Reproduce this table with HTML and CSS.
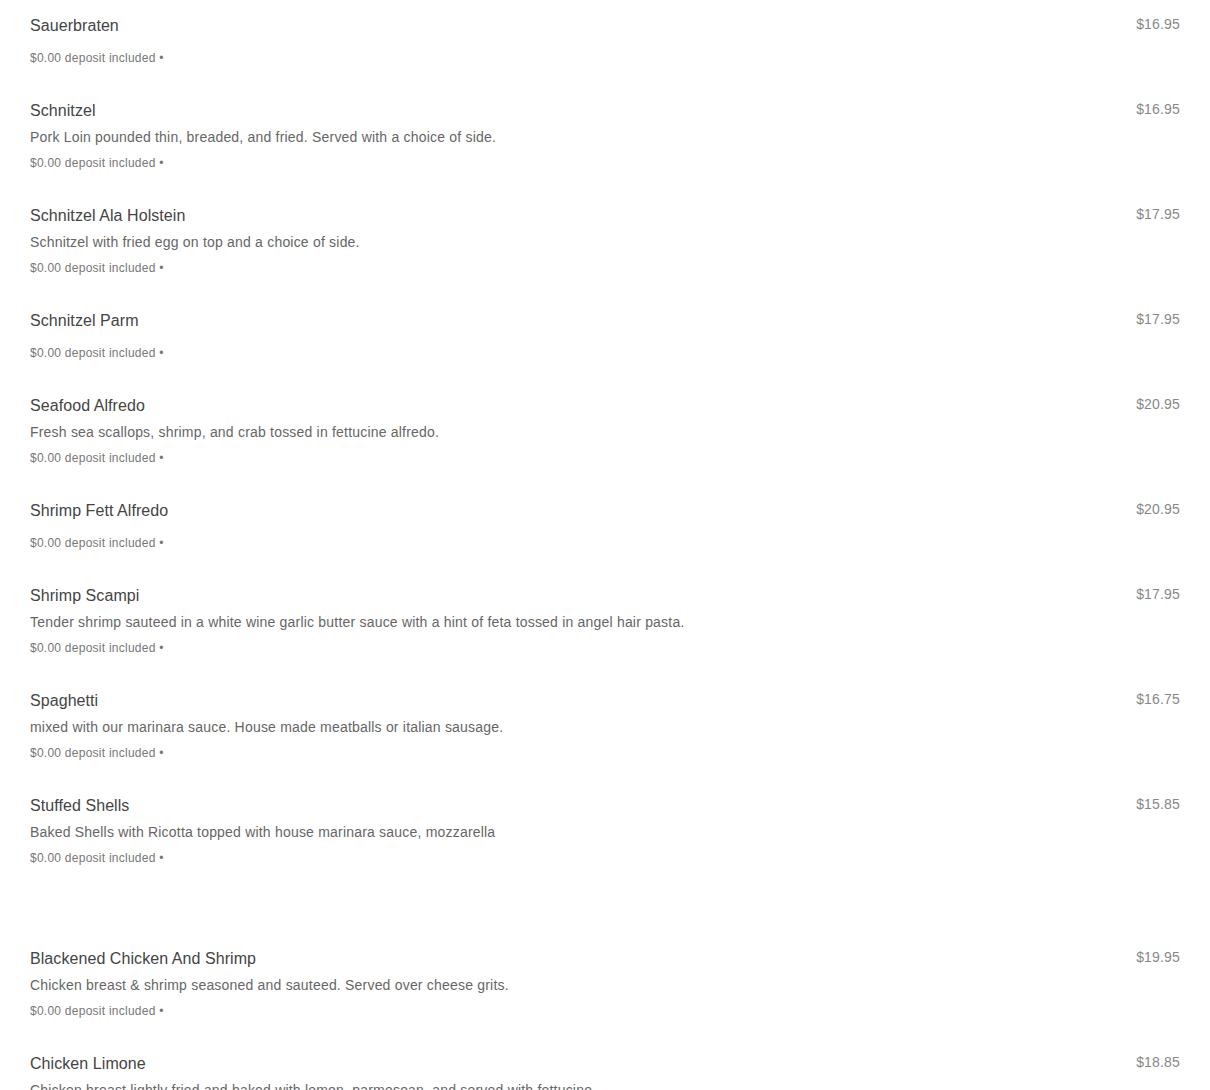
FILE: index.html
```html
<!DOCTYPE html>
<html>
<head>
<meta charset="utf-8">
<link rel="stylesheet" href="styles.css">
</head>
<body>
<div class="menu">
  <div class="item"><div class="info"><div class="name">Sauerbraten</div><div class="deposit">$0.00 deposit included •</div></div><div class="price">$16.95</div></div>
  <div class="item"><div class="info"><div class="name">Schnitzel</div><div class="desc">Pork Loin pounded thin, breaded, and fried. Served with a choice of side.</div><div class="deposit">$0.00 deposit included •</div></div><div class="price">$16.95</div></div>
  <div class="item"><div class="info"><div class="name">Schnitzel Ala Holstein</div><div class="desc">Schnitzel with fried egg on top and a choice of side.</div><div class="deposit">$0.00 deposit included •</div></div><div class="price">$17.95</div></div>
  <div class="item"><div class="info"><div class="name">Schnitzel Parm</div><div class="deposit">$0.00 deposit included •</div></div><div class="price">$17.95</div></div>
  <div class="item"><div class="info"><div class="name">Seafood Alfredo</div><div class="desc">Fresh sea scallops, shrimp, and crab tossed in fettucine alfredo.</div><div class="deposit">$0.00 deposit included •</div></div><div class="price">$20.95</div></div>
  <div class="item"><div class="info"><div class="name">Shrimp Fett Alfredo</div><div class="deposit">$0.00 deposit included •</div></div><div class="price">$20.95</div></div>
  <div class="item"><div class="info"><div class="name">Shrimp Scampi</div><div class="desc">Tender shrimp sauteed in a white wine garlic butter sauce with a hint of feta tossed in angel hair pasta.</div><div class="deposit">$0.00 deposit included •</div></div><div class="price">$17.95</div></div>
  <div class="item"><div class="info"><div class="name">Spaghetti</div><div class="desc">mixed with our marinara sauce. House made meatballs or italian sausage.</div><div class="deposit">$0.00 deposit included •</div></div><div class="price">$16.75</div></div>
  <div class="item"><div class="info"><div class="name">Stuffed Shells</div><div class="desc">Baked Shells with Ricotta topped with house marinara sauce, mozzarella</div><div class="deposit">$0.00 deposit included •</div></div><div class="price">$15.85</div></div>
  <div class="section-gap"></div>
  <div class="item"><div class="info"><div class="name">Blackened Chicken And Shrimp</div><div class="desc">Chicken breast &amp; shrimp seasoned and sauteed. Served over cheese grits.</div><div class="deposit">$0.00 deposit included •</div></div><div class="price">$19.95</div></div>
  <div class="item"><div class="info"><div class="name">Chicken Limone</div><div class="desc">Chicken breast lightly fried and baked with lemon, parmesean, and served with fettucine.</div><div class="deposit">$0.00 deposit included •</div></div><div class="price">$18.85</div></div>
</div>
</body>
</html>
```
FILE: styles.css
```css
html, body {
  margin: 0;
  padding: 0;
  background: #fff;
  font-family: "Liberation Sans", Arial, sans-serif;
}
.menu {
  display: flex;
  flex-direction: column;
}
.item {
  display: flex;
  justify-content: space-between;
  align-items: flex-start;
  padding: 16px 30px 19px 30px;
}
.info {
  display: flex;
  flex-direction: column;
}
.name {
  font-size: 16px;
  line-height: 20px;
  color: #444;
  letter-spacing: 0.07px;
  margin-bottom: 6px;
}
.desc {
  font-size: 14px;
  line-height: 20px;
  color: #666;
  letter-spacing: 0.2px;
}
.deposit {
  font-size: 12px;
  line-height: 16px;
  color: #777;
  letter-spacing: 0.25px;
  margin-top: 8px;
}
.price {
  font-size: 14px;
  line-height: 16px;
  color: #888;
  letter-spacing: 0.17px;
}
.section-gap {
  height: 48px;
}
```
